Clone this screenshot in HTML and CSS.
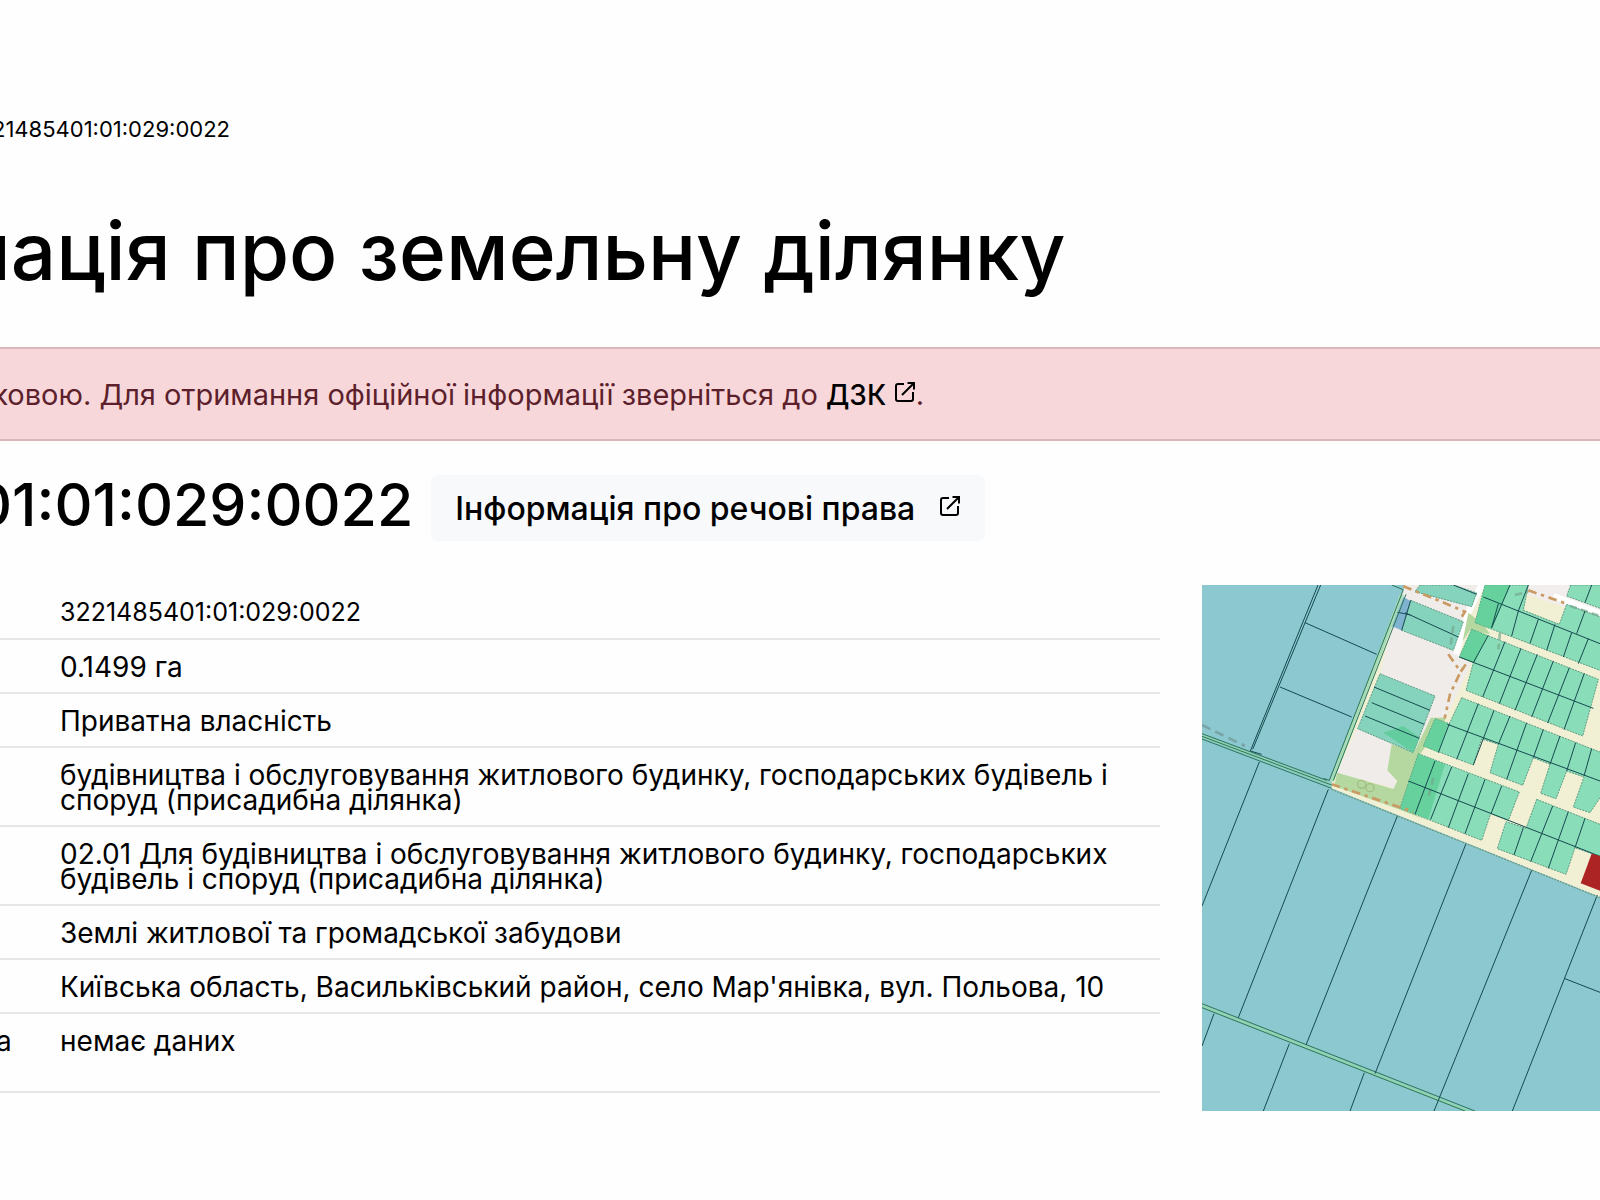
FILE: index.html
```html
<!DOCTYPE html>
<html lang="uk">
<head>
<meta charset="utf-8">
<title>Інформація про земельну ділянку</title>
<link rel="stylesheet" href="styles.css">
</head>
<body>
<svg class="sprite" aria-hidden="true">
  <symbol id="external" viewBox="0 0 22 22">
    <path d="M10 3H4Q2 3 2 5V18Q2 20 4 20H17Q19 20 19 18V11M8 14L19.500 2.500M13.500 2H20V8.500" fill="none" stroke="currentColor" stroke-width="2"/>
  </symbol>
</svg>
<nav class="breadcrumb">21485401:01:029:0022</nav>
<main>
  <h1 class="title">мація про земельну ділянку</h1>
  <p class="alert">дковою. Для отримання офіційної інформації зверніться до <a class="alert-link" href="#">ДЗК <svg class="icon"><use href="#external"/></svg></a>.</p>
  <div class="heading">
    <h2 class="number">01:01:029:0022</h2>
    <button class="rights" type="button">Інформація про речові права <svg class="icon"><use href="#external"/></svg></button>
  </div>
  <div class="details">
    <table class="facts">
      <tr><th></th><td class="digits">3221485401:01:029:0022</td></tr>
      <tr><th></th><td>0.1499 га</td></tr>
      <tr><th></th><td>Приватна власність</td></tr>
      <tr><th></th><td>будівництва і обслуговування житлового будинку, господарських будівель і споруд (присадибна ділянка)</td></tr>
      <tr><th></th><td>02.01 Для будівництва і обслуговування житлового будинку, господарських будівель і споруд (присадибна ділянка)</td></tr>
      <tr><th></th><td>Землі житлової та громадської забудови</td></tr>
      <tr><th></th><td>Київська область, Васильківський район, село Мар'янівка, вул. Польова, 10</td></tr>
      <tr class="tall"><th scope="row">а</th><td>немає даних</td></tr>
    </table>
    <svg class="map" viewBox="36 42 1194 1578" preserveAspectRatio="xMinYMin slice" role="img" aria-label="Кадастрова карта">
      <rect x="36" y="42" width="1600" height="1578" fill="#8cc8cf"/>
      <!-- village ground -->
      <path d="M645 42H1700V1160L1230 978L425 652V630L600 165Z" fill="#f2f0d4"/>
      <path d="M645 42H885L830 130L795 245L845 275L765 445L735 435L672 545L605 520L592 598L620 630L612 652L440 605L500 475L570 308L605 172Z" fill="#f0ecea"/>
      <path d="M1015 42H1145L1130 75L1230 112V142L1015 72Z" fill="#f3eeee"/>
      <path d="M875 42L832 130L798 250" fill="none" stroke="#fff" stroke-width="20"/>
      <path d="M1090 75L1250 136" fill="none" stroke="#fff" stroke-width="18"/>
      <!-- grass -->
      <path d="M605 520L672 545L722 440L770 440L690 550L650 720L715 750L630 716L432 645L442 605L610 654L622 630L592 598ZM835 125L880 160L900 190L840 178L818 210Z" fill="#b5d7a0"/>
      <!-- parcels -->
      <g class="parcels">
        <path d="M690 42H790L860 66L845 107L675 62ZM662 88L820 152L790 238L635 178ZM570 308L735 375L670 545L503 473Z" fill="#86d3bd"/>
        <path d="M885 42H1015L1000 118L1108 160L1130 100L1250 145V306L855 155ZM1142 42H1250V119L1130 75Z"/>
        <path d="M845 175L1225 325L1178 495L828 358L850 275L808 258Z"/>
        <path d="M815 380L1250 551V650L1200 725L1150 708L1182 618L1130 600L1098 683L1052 667L1080 580L1030 560L998 643L900 605L925 520L875 504L850 582L700 525L735 443L778 458Z"/>
        <path d="M685 548L988 663L955 748L902 728L875 808L630 712Z"/>
        <path d="M1040 685L1250 768V864L1155 830L1128 910L922 833L948 752L1008 772Z"/>
      </g>
      <path d="M640 78L662 90L635 178L603 165Z" fill="#80b3d0"/>
      <g fill="#4fca8a" opacity=".6">
        <path d="M885 42H960L905 175L855 155ZM845 175L893 193L855 275L808 258ZM735 443L775 458L745 545L700 525ZM685 548L765 580L715 745L630 712ZM580 485L640 465L690 500L670 545Z"/>
      </g>
      <path class="brown" d="M640 46L730 82L825 122L808 150M775 250L812 302L835 270M808 310L780 370L764 442M425 640L670 722M1015 58L1135 100"/>
      <path d="M790 165L780 235M930 185L925 235M730 620L715 680M975 72L1015 62M1140 105L1230 135" fill="none" stroke="#74a88d" stroke-width="8" stroke-dasharray="22 12" opacity=".7"/>
      <g fill="none" stroke="#a3bf83" stroke-width="4"><circle cx="515" cy="640" r="12"/><circle cx="540" cy="650" r="12"/></g>
      <path d="M36 462L165 525" fill="none" stroke="#78a5a8" stroke-width="8" stroke-dasharray="28 16"/>
      <!-- parcel boundaries -->
      <path class="line" d="M880 78L1230 218M925 98L905 170M985 120L965 195M1045 145L1020 217M1095 160L1070 238M1145 185L1120 258M1195 203L1165 278M960 42L905 170M1015 42L985 120M1185 120L1160 188M1205 42L1185 95M790 42L860 70M662 88L635 178M645 125L805 198M615 122L662 132"/>
      <path class="line" d="M808 258L1210 412M895 193L850 275M945 212L878 378M993 232L928 398M1042 250L975 418M1090 270L1025 438M1138 290L1073 456M1183 307L1122 476"/>
      <path class="line" d="M772 460L1230 630M778 458L745 545M865 398L800 565M912 418L850 582M960 435L925 520M1010 455L950 625M1060 475L1030 560M1110 495L1080 580M1157 515L1130 600M1205 533L1182 615"/>
      <path class="line" d="M655 630L1230 856M735 570L675 730M785 588L722 745M835 608L775 770M885 625L825 788M935 645L903 728M1000 770L972 852M1088 705L1022 872M1135 722L1075 892M1185 742L1155 830M552 348L720 418M545 395L703 460M525 435L688 502"/>
      <!-- fields -->
      <path d="M636 70L425 632" fill="none" stroke="#a8dcb8" stroke-width="12"/>
      <path d="M36 495L425 642M36 1304L840 1622" fill="none" stroke="#91d3b0" stroke-width="8"/>
      <path class="line canal" d="M36 488L410 628M36 496L425 642M36 504L425 652M36 1298L855 1620M36 1310L825 1620M605 42L640 56L418 628L400 622M648 70L430 628"/>
      <path class="line" d="M392 42L188 535M384 42L181 540L215 550M345 155L560 250M270 348L485 438M208 573L36 1005M415 655L145 1340M622 735L348 1422M828 818L555 1508M1025 898L732 1620M1222 972L967 1620M1122 1222L1230 1264M72 1328L36 1425M298 1418L220 1620M523 1505L480 1620"/>
      <path d="M425 655L1230 980" fill="none" stroke="#6b9a86" stroke-width="4" stroke-dasharray="6 3"/>
      <path d="M1205 848L1250 860V967L1172 937Z" fill="#ad2425"/>
    </svg>
  </div>
</main>
</body>
</html>
```
FILE: styles.css
```css
* { box-sizing: border-box; }
body {
  margin: 0;
  padding-top: 117px;
  background: #fefefe;
  color: #000;
  font-family: Inter, "Liberation Sans", sans-serif;
  font-size: 28px;
  overflow-x: hidden;
}
.sprite { display: none; }
.icon { width: 22px; height: 22px; }
.breadcrumb {
  margin-bottom: 62px;
  font-size: 22px;
  line-height: 24px;
  text-indent: -8px;
}
.title {
  margin: 0 0 48px;
  font-size: 80px;
  font-weight: 500;
  line-height: 96px;
  text-indent: -52px;
  white-space: nowrap;
}
.alert {
  margin: 0 0 34px;
  padding: 29px 0 27px;
  border: solid #dcb5ba;
  border-width: 2px 0;
  background: #f7d7da;
  color: #5c1f2b;
  font-size: 29px;
  line-height: 33px;
  text-indent: -26px;
  white-space: nowrap;
}
.alert-link {
  color: #000;
  font-size: 28px;
  font-weight: 500;
  text-decoration: none;
}
.alert-link .icon { vertical-align: 2px; }
.heading {
  display: flex;
  align-items: flex-start;
  gap: 18px;
  margin-bottom: 44px;
}
.number {
  margin: 0;
  font-size: 59px;
  font-weight: 500;
  line-height: 60px;
  text-indent: -26px;
}
.rights {
  display: flex;
  align-items: center;
  gap: 24px;
  height: 66px;
  padding: 0 24px;
  border: 0;
  border-radius: 6px;
  background: #f7f9fa;
  color: #000;
  font: 500 32px Inter, "Liberation Sans", sans-serif;
}
.rights .icon { margin-bottom: 4px; }
.details {
  display: flex;
  align-items: flex-start;
  gap: 42px;
}
.facts {
  flex: 0 0 auto;
  width: 72.5%;
  border-collapse: collapse;
  table-layout: fixed;
  line-height: 25px;
}
.facts th,
.facts td {
  padding: 15px 0 12px;
  border-bottom: 2px solid #e4e6e7;
  font-weight: 400;
  text-align: left;
  vertical-align: top;
}
.facts th {
  width: 60px;
  text-indent: -4px;
}
.facts .digits {
  padding-bottom: 13px;
  font-size: 25px;
}
.facts .tall td { padding-bottom: 37px; }
.map {
  flex: 1 1 0;
  min-width: 0;
  height: 526px;
}
.parcels { fill: #8addb9; stroke: #5c9c80; stroke-width: 3; stroke-dasharray: 6 3; }
.line { fill: none; stroke: #164a50; stroke-width: 3; }
.canal { stroke: #2b7658; }
.brown { fill: none; stroke: #c99a63; stroke-width: 8; stroke-dasharray: 26 14 10 14; }
```
